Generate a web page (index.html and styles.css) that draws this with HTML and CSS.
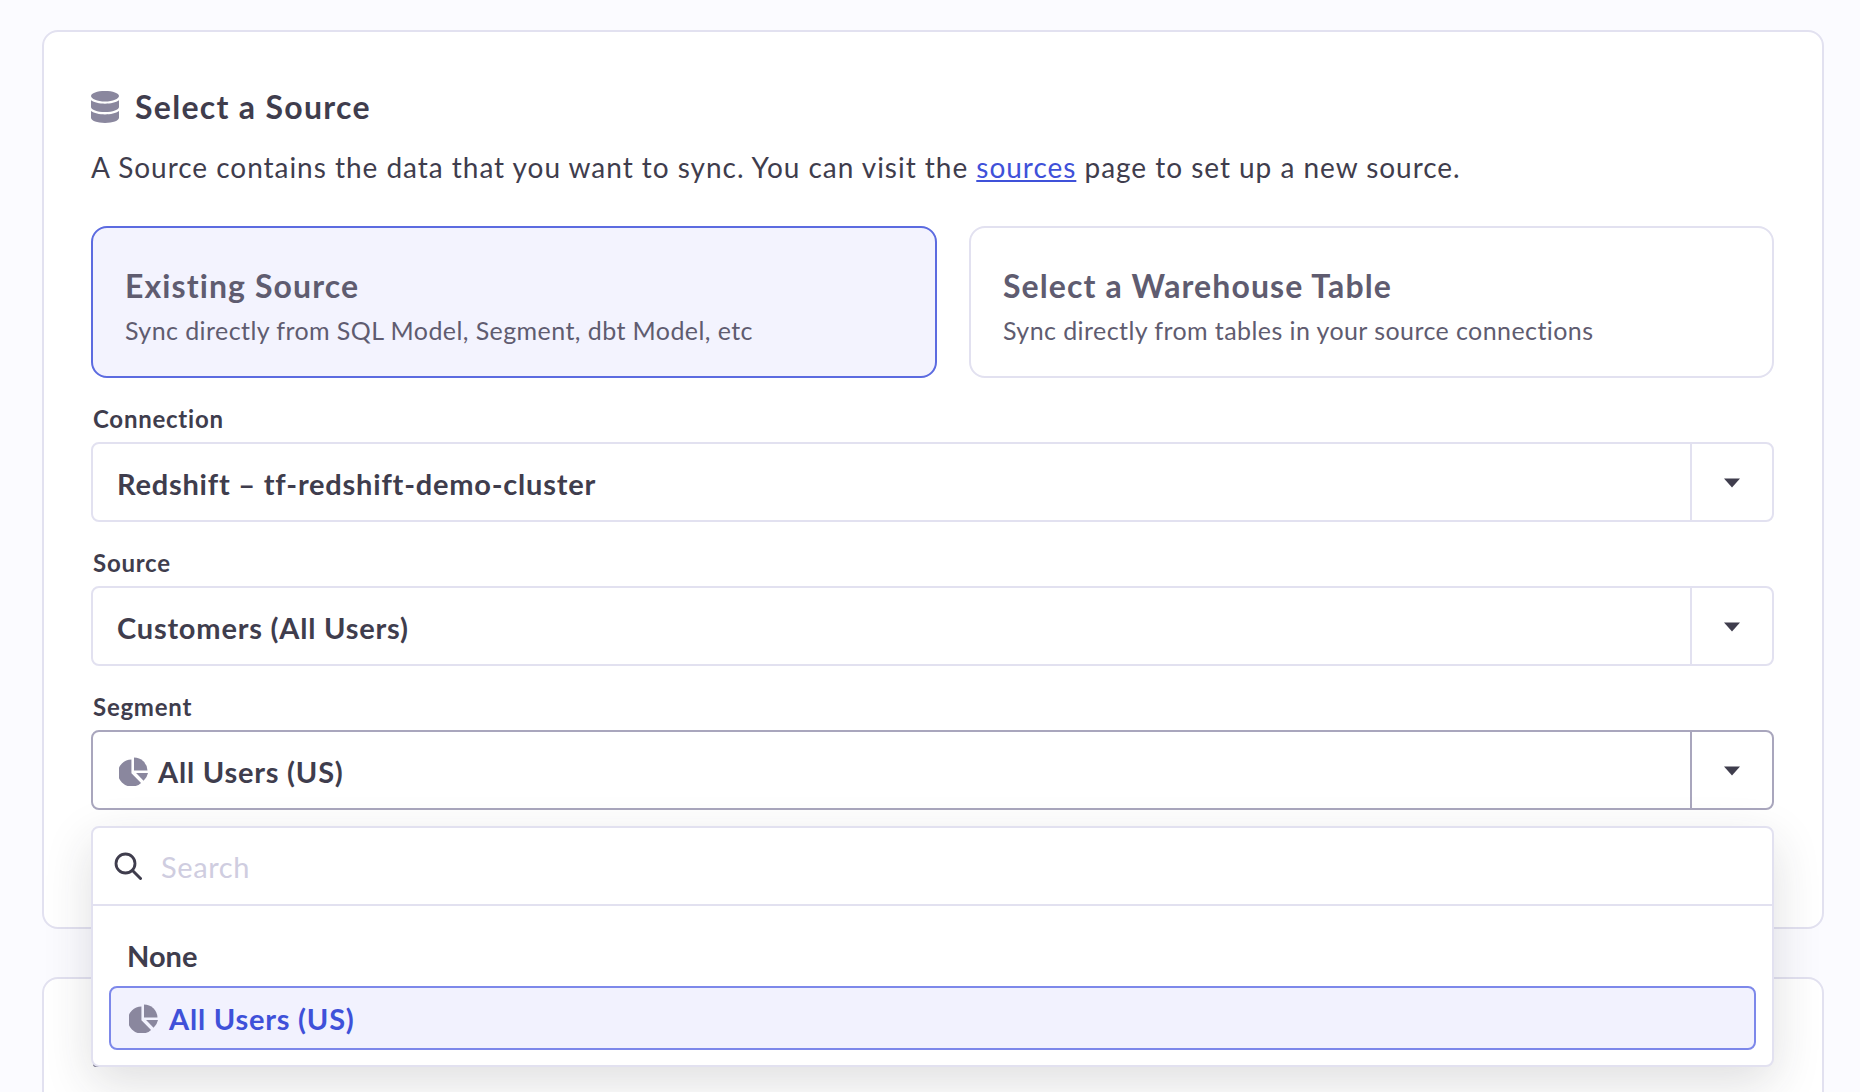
FILE: index.html
```html
<!DOCTYPE html>
<html lang="en">
<head>
<meta charset="utf-8">
<title>Select a Source</title>
<link rel="stylesheet" href="styles.css">
</head>
<body>
<main class="page">
  <section class="card card-main">
    <h2 class="title">
      <svg class="db-icon" viewBox="0 0 28 32" aria-hidden="true"><path fill="#8a879e" d="M14 0c7.7 0 14 2.100 14 5s-6.300 5.500-14 5.500S0 7.900 0 5s6.300-5 14-5Z"/><path fill="#8a879e" d="M0 9.300c3 2.300 8.500 3.400 14 3.400s11-1.100 14-3.400V16c0 2.900-6.300 5-14 5S0 18.900 0 16Z"/><path fill="#8a879e" d="M0 20c3 2.300 8.500 3.400 14 3.400S25 22.300 28 20v6.800c0 2.900-6.300 5.200-14 5.200S0 29.700 0 26.800Z"/></svg>
      <span>Select a Source</span>
    </h2>
    <p class="desc">A Source contains the data that you want to sync. You can visit the <a href="#">sources</a> page to set up a new source.</p>
    <div class="tabs">
      <div class="tab tab-active">
        <div class="tab-title">Existing Source</div>
        <div class="tab-sub">Sync directly from SQL Model, Segment, dbt Model, etc</div>
      </div>
      <div class="tab tab-right">
        <div class="tab-title">Select a Warehouse Table</div>
        <div class="tab-sub">Sync directly from tables in your source connections</div>
      </div>
    </div>
    <div class="field">
      <label class="label">Connection</label>
      <div class="select">
        <div class="value">Redshift – tf-redshift-demo-cluster</div>
        <div class="caret-box"><svg class="caret" viewBox="0 0 16 10" aria-hidden="true"><path d="M0 0.500h16L8 9.500Z"/></svg></div>
      </div>
    </div>
    <div class="field">
      <label class="label">Source</label>
      <div class="select">
        <div class="value">Customers (All Users)</div>
        <div class="caret-box"><svg class="caret" viewBox="0 0 16 10" aria-hidden="true"><path d="M0 0.500h16L8 9.500Z"/></svg></div>
      </div>
    </div>
    <div class="field field-open">
      <label class="label">Segment</label>
      <div class="select select-open">
        <div class="value">
          <svg class="pie pie-value" viewBox="0 0 28 28" aria-hidden="true"><path fill="#8a879e" d="M12 2.500v13.200l9.300 9.300A13 13 0 0 1 12 28.500 13 13 0 0 1 12 2.500Z"/><path fill="#8a879e" d="M14.500 0.500A13 13 0 0 1 27.500 13H14.500Z"/><path fill="#8a879e" d="M16.500 15.500H28a13 13 0 0 1-4.300 7.400Z"/></svg>
          All Users (US)
        </div>
        <div class="caret-box caret-box-open"><svg class="caret" viewBox="0 0 16 10" aria-hidden="true"><path d="M0 0.500h16L8 9.500Z"/></svg></div>
      </div>
      <div class="menu">
        <div class="search">
          <svg class="search-icon" viewBox="0 0 28 28" aria-hidden="true"><circle cx="11.500" cy="11.500" r="9.500" fill="none" stroke="#3f3d4d" stroke-width="2.800"/><path d="M18.500 18.500 26.500 26.500" stroke="#3f3d4d" stroke-width="3" stroke-linecap="round"/></svg>
          <span class="placeholder">Search</span>
        </div>
        <div class="options">
          <div class="option option-none">None</div>
          <div class="option option-selected">
            <svg class="pie" viewBox="0 0 28 28" aria-hidden="true"><path fill="#8a879e" d="M12 2.500v13.200l9.300 9.300A13 13 0 0 1 12 28.500 13 13 0 0 1 12 2.500Z"/><path fill="#8a879e" d="M14.500 0.500A13 13 0 0 1 27.500 13H14.500Z"/><path fill="#8a879e" d="M16.500 15.500H28a13 13 0 0 1-4.300 7.400Z"/></svg>
            All Users (US)
          </div>
        </div>
      </div>
    </div>
  </section>
  <section class="card card-next">
    <div class="next-stub"></div>
  </section>
</main>
</body>
</html>
```

FILE: styles.css
```css
* { box-sizing: border-box; }
html, body { margin: 0; height: 1092px; overflow: hidden; }
body {
  background: #fbfbff;
  color: #3f3d4d;
  font-family: "Lato", "Noto Sans", sans-serif;
  font-variant-ligatures: none;
}
.page {
  height: 1092px;
  overflow: hidden;
  padding: 30px 36px 0 42px;
  display: flex;
  flex-direction: column;
  gap: 48px;
}
.card {
  flex: none;
  background: #fff;
  border: 2px solid #e2e1f0;
  border-radius: 16px;
  padding: 0 48px 0 47px;
}
.card-main { height: 899px; padding-top: 56px; }
.card-next { height: 200px; padding-top: 64px; }
.next-stub { width: 24px; height: 24px; border: 2px solid #6b6980; border-radius: 3px; margin-left: 2px; }
.title {
  margin: 0;
  display: flex;
  align-items: center;
  gap: 16px;
  font-size: 32px;
  line-height: 38px;
  font-weight: 700;
  letter-spacing: 1.3px;
}
.db-icon { width: 28px; height: 32px; flex: none; }
.desc { margin: 23px 0 0; font-size: 28px; line-height: 36px; letter-spacing: 0.97px; }
.desc a { color: #3f51d9; }
.tabs { display: flex; gap: 32px; margin-top: 41px; }
.tab {
  height: 152px;
  border: 2px solid #e2e1f0;
  border-radius: 16px;
  padding: 38px 32px 0;
  color: #5f5c70;
}
.tab-active { width: 846px; background: #f3f3fe; border-color: #5c6be0; }
.tab-right { flex: 1; }
.tab-title { font-size: 32px; line-height: 40px; font-weight: 700; letter-spacing: 1.1px; }
.tab-sub { font-size: 25px; line-height: 32px; margin-top: 8px; letter-spacing: 0.42px; }
.field { position: relative; }
.label { display: block; margin: 26px 0 0 2px; font-size: 24px; line-height: 30px; font-weight: 700; letter-spacing: 0.75px; }
.select {
  display: flex;
  height: 80px;
  margin-top: 8px;
  border: 2px solid #e2e1f0;
  border-radius: 8px;
  background: #fff;
}
.select-open { border-color: #a9a6bd; }
.value {
  flex: 1;
  display: flex;
  align-items: center;
  gap: 10px;
  padding-left: 24px;
  padding-top: 2px;
  font-size: 29px;
  font-weight: 700;
  letter-spacing: 0.78px;
}
.caret-box {
  width: 82px;
  padding-top: 2px;
  border-left: 2px solid #e2e1f0;
  display: flex;
  align-items: center;
  justify-content: center;
}
.caret-box-open { border-left-color: #a9a6bd; }
.caret { width: 16px; height: 10px; fill: #3f3d4d; }
.pie { width: 29px; height: 29px; flex: none; }
.pie-value { margin-left: 2px; }
.menu {
  position: absolute;
  left: 0;
  right: 0;
  top: 134px;
  height: 241px;
  background: #fff;
  border: 2px solid #e2e1f0;
  border-radius: 8px;
  box-shadow: 0 16px 48px rgba(40, 40, 50, 0.15);
  z-index: 5;
}
.search {
  height: 78px;
  display: flex;
  align-items: center;
  gap: 19px;
  padding: 0 21px;
  border-bottom: 2px solid #e2e1f0;
}
.search-icon { width: 28px; height: 28px; flex: none; }
.placeholder { font-size: 29px; color: #cfcde0; letter-spacing: 0.6px; }
.options { padding: 18px 16px 0; }
.option { height: 62px; padding-left: 18px; display: flex; align-items: center; font-size: 29px; font-weight: 700; }
.option-selected {
  height: 64px;
  gap: 11px;
  background: #f2f2fe;
  border: 2px solid #7d88ea;
  border-radius: 8px;
  color: #3f51d9;
  letter-spacing: 0.78px;
}
```
